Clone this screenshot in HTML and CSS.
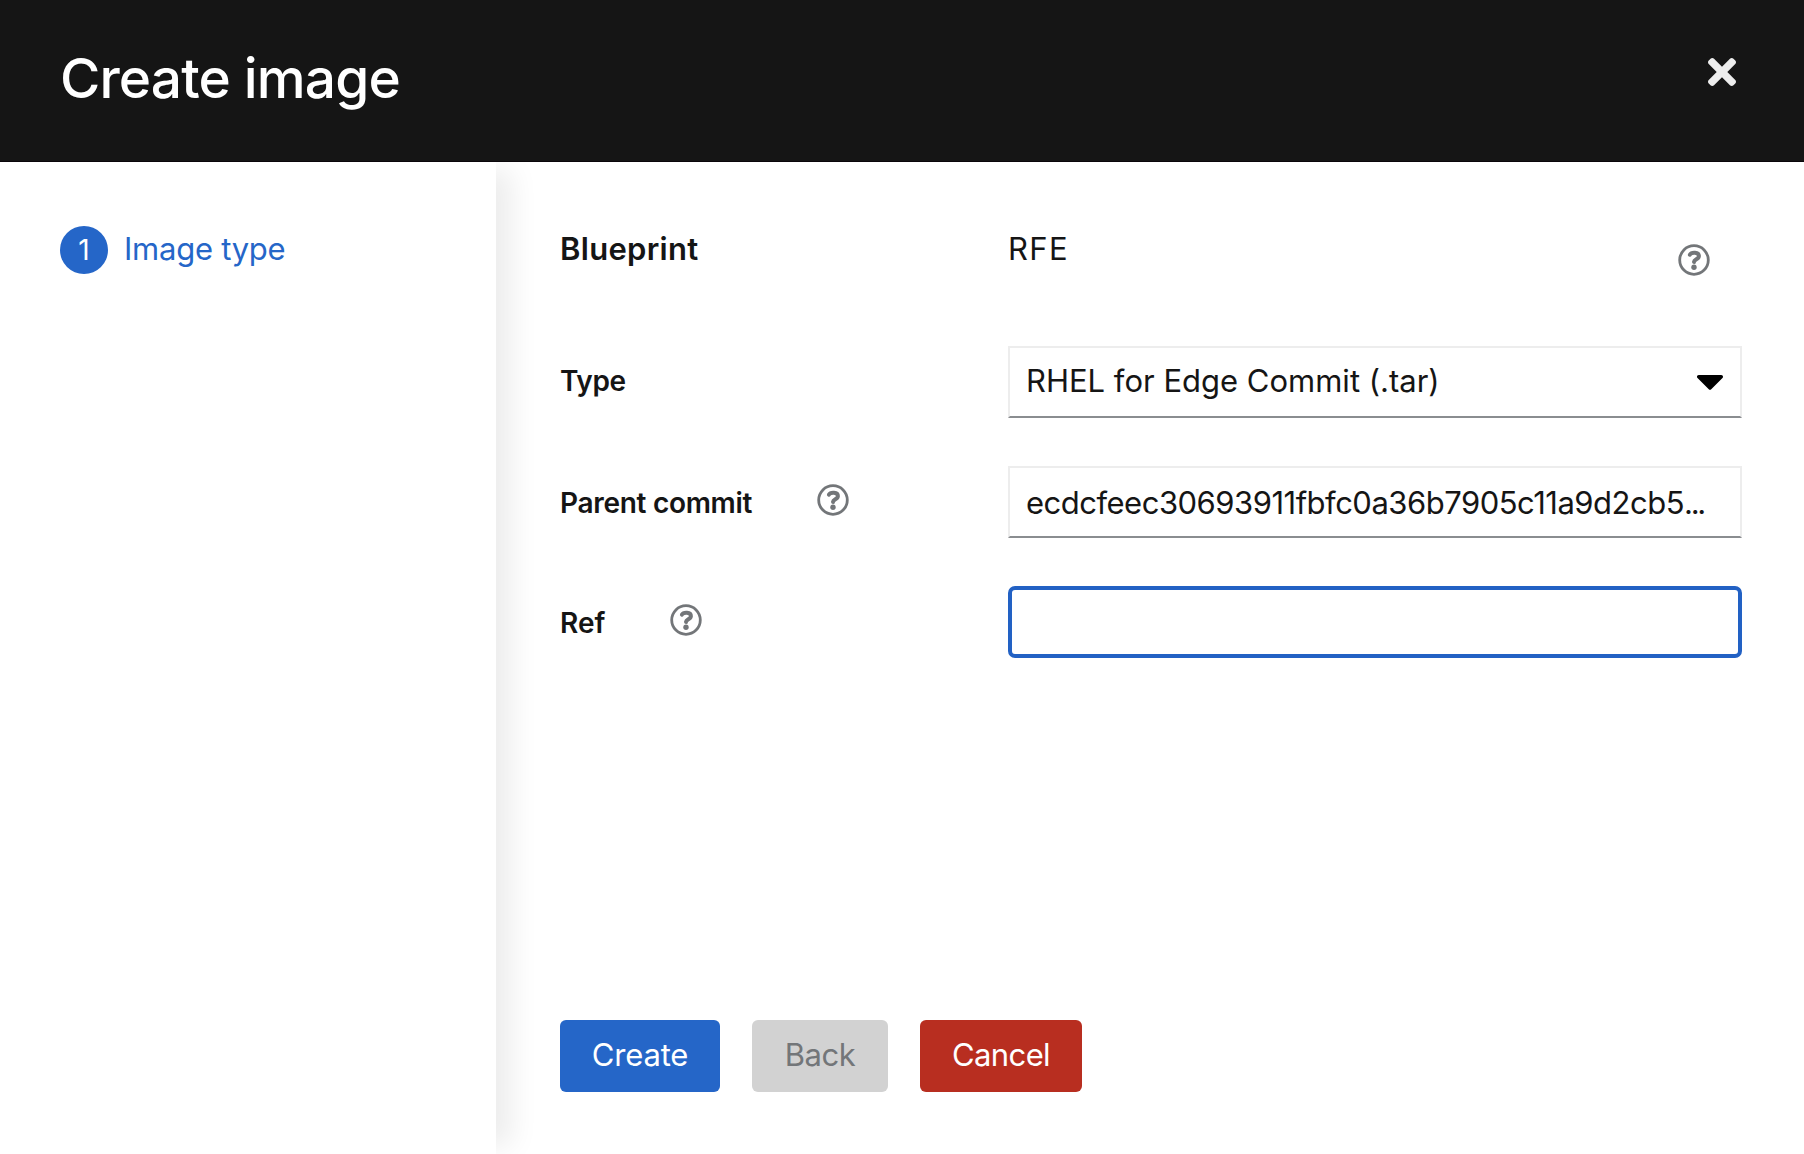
FILE: index.html
```html
<!DOCTYPE html>
<html lang="en">
<head>
<meta charset="utf-8">
<title>Create image</title>
<link rel="stylesheet" href="styles.css">
</head>
<body>
<svg width="0" height="0" class="defs" aria-hidden="true">
  <symbol id="help" viewBox="-16 -16 32 32">
    <circle r="14.3" fill="none" stroke="currentColor" stroke-width="2.8"/>
    <path d="M-4.1-5.3C-2.6-8.2 5-8.3 4.9-3.9C4.8-.6.2-.8 0 2" fill="none" stroke="currentColor" stroke-width="4" stroke-linecap="round"/>
    <circle cy="7.2" r="2.7" fill="currentColor"/>
  </symbol>
</svg>
<div class="wizard">
  <header class="header">
    <h1 class="title">Create image</h1>
    <button class="close" aria-label="Close">
      <svg width="28" height="28" viewBox="0 80 352 352"><path fill="currentColor" d="M242.72 256l100.07-100.07c12.28-12.28 12.28-32.19 0-44.48l-22.24-22.24c-12.28-12.28-32.19-12.28-44.48 0L176 189.28 75.93 89.21c-12.28-12.28-32.19-12.28-44.48 0L9.21 111.45c-12.28 12.28-12.28 32.19 0 44.48L109.28 256 9.21 356.07c-12.28 12.28-12.28 32.19 0 44.48l22.24 22.24c12.28 12.28 32.2 12.28 44.48 0L176 322.72l100.07 100.07c12.28 12.28 32.2 12.28 44.48 0l22.24-22.24c12.28-12.28 12.28-32.19 0-44.48L242.72 256z"/></svg>
    </button>
  </header>
  <div class="body">
    <nav class="nav">
      <a class="step"><span class="num">1</span><span class="step-name">Image type</span></a>
    </nav>
    <main class="main">
      <div class="form">
        <div class="row first">
          <div class="label"><span class="blueprint">Blueprint</span></div>
          <div class="value"><span class="rfe">RFE</span><svg class="help"><use href="#help"/></svg></div>
        </div>
        <div class="row">
          <div class="label"><span class="type">Type</span></div>
          <div class="control select"><span class="select-text">RHEL for Edge Commit (.tar)</span><svg width="28" height="15" viewBox="0 192 320 169"><path d="M31.3 192h257.3c17.8 0 26.7 21.5 14.1 34.1L174.1 354.7c-7.8 7.8-20.5 7.8-28.3 0L17.2 226.1C4.6 213.5 13.5 192 31.3 192z"/></svg></div>
        </div>
        <div class="row">
          <div class="label low"><span class="parent">Parent commit</span><svg class="help"><use href="#help"/></svg></div>
          <div class="control low"><span class="hash">ecdcfeec30693911fbfc0a36b7905c11a9d2cb5<span class="dots">...</span></span></div>
        </div>
        <div class="row">
          <div class="label low"><span class="ref">Ref</span><svg class="help"><use href="#help"/></svg></div>
          <div class="control focused"></div>
        </div>
      </div>
      <footer class="footer">
        <button class="btn create"><span>Create</span></button>
        <button class="btn back" disabled><span>Back</span></button>
        <button class="btn cancel"><span>Cancel</span></button>
      </footer>
    </main>
  </div>
</div>
</body>
</html>
```
FILE: styles.css
```css
* { box-sizing: border-box; }
body { margin: 0; font-family: Inter, "Liberation Sans", sans-serif; font-size: 31px; line-height: 48px; color: #151515; background: #fff; }
button { border: 0; margin: 0; padding: 0; background: none; font: inherit; }
svg { display: block; flex: none; }
span, h1 { white-space: nowrap; }
.defs { display: none; }
.wizard { height: 1154px; display: flex; flex-direction: column; overflow: hidden; }
.header { height: 162px; flex: none; background: #151515; border-bottom: 1px solid #0a060a; display: flex; justify-content: space-between; align-items: flex-start; padding: 42px 68px 0 60px; }
.title { margin: 0; color: #fff; font-size: 55px; font-weight: 550; line-height: 73px; letter-spacing: -.85px; }
.close { color: #ededed; margin-top: 16px; }
.body { flex: 1; display: flex; overflow: hidden; }
.nav { width: 496px; flex: none; padding: 64px 0 0 60px; background: #fff; box-shadow: 24px 0 26px -8px rgba(3,3,3,.075); }
.step { display: flex; align-items: center; gap: 16px; color: #2566c8; }
.num { width: 48px; height: 48px; border-radius: 50%; background: #2566c8; color: #fff; text-align: center; font-size: 28px; }
.step-name { letter-spacing: -.25px; margin-top: -2px; }
.main { flex: 1; padding: 64px 62px 62px 64px; display: flex; flex-direction: column; justify-content: space-between; }
.form { display: flex; flex-direction: column; gap: 48px; }
.row { display: grid; grid-template-columns: 448px 734px; }
.first { height: 72px; }
.label { display: flex; align-items: center; font-weight: 600; font-size: 28px; height: 72px; }
.label span { margin-top: -2px; }
.first .label { font-size: 31px; height: 48px; }
.blueprint { letter-spacing: .3px; }
.type { letter-spacing: -.4px; }
.parent { letter-spacing: -.3px; }
.value { display: flex; justify-content: space-between; height: 48px; padding-right: 32px; }
.rfe { letter-spacing: 1.4px; margin-top: -1px; }
.value .help { margin-top: 18px; }
.help { width: 32px; height: 32px; color: #737679; }
.label .help { margin: -4px 0 0 65px; }
.control { height: 72px; border: 2px solid #ededed; border-bottom-color: #8a8d90; padding: 0 16px; display: flex; align-items: center; justify-content: space-between; overflow: hidden; }
.select-text { margin-top: -2px; }
.hash { letter-spacing: -.5px; margin-top: 2px; }
.dots { letter-spacing: -2.3px; }
.focused { border: 4px solid #2261c4; border-radius: 7px; }
.label.low span { margin-top: 2px; }
.footer { display: flex; gap: 32px; }
.btn { height: 72px; padding-bottom: 2px; border-radius: 6px; color: #fff; }
.create { width: 160px; background: #2566c8; letter-spacing: -.2px; }
.back { width: 136px; background: #d2d2d2; color: #737679; letter-spacing: -.5px; }
.cancel { width: 162px; background: #b82e20; letter-spacing: -.6px; }
```
